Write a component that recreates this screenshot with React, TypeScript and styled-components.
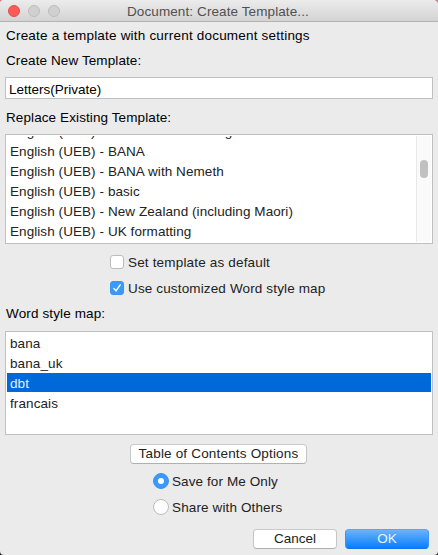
import React from "react";
import styled, { createGlobalStyle } from "styled-components";

const Global = createGlobalStyle`
  html, body, #root { margin: 0; padding: 0; height: 100%; overflow: hidden; background: #ebebeb; }
  * { box-sizing: border-box; }
`;

const Dialog = styled.div`
  display: flex;
  flex-direction: column;
  width: 438px;
  height: 555px;
  overflow: hidden;
  background: #ebebeb;
  border-radius: 4px 5px 4px 4px;
  font: 13.5px/20px "Liberation Sans", Arial, sans-serif;
  color: #111;
`;

const Backdrop = styled.div`
  width: 438px;
  height: 555px;
  background: linear-gradient(to bottom, #c98288 50%, #222 50%);
`;

const TitleBar = styled.header`
  display: flex;
  align-items: center;
  height: 22px;
  padding: 0 0 0 8px;
  background: linear-gradient(#ececec, #d3d3d3);
  border-bottom: 1px solid #b3b3b3;
`;

const Light = styled.span<{ $close?: boolean }>`
  width: 12px;
  height: 12px;
  margin: 1px 8px 0 0;
  border-radius: 50%;
  background: ${(p) => (p.$close ? "#fc5b57" : "#d0d0d0")};
  border: 1px solid ${(p) => (p.$close ? "#e2504c" : "#bdbdbd")};
`;

const Text = styled.span<{ $track?: number }>`
  white-space: pre;
  letter-spacing: ${(p) => p.$track ?? 0.1}px;
`;

const Title = styled(Text)`
  margin: 2px 0 0 59px;
  color: #505050;
`;

const Content = styled.main`
  display: flex;
  flex-direction: column;
  padding: 4px 5px 0;
`;

const Label = styled.div<{ $top: number }>`
  height: 20px;
  margin-top: ${(p) => p.$top}px;
  padding-left: 1px;
  color: #000;
`;

const Field = styled.div`
  height: 22px;
  margin-top: 6px;
  padding: 2px 3px;
  background: #fff;
  border: 1px solid #c0c0c0;
  color: #000;
`;

const ListBox = styled.div<{ $height: number; $top: number }>`
  display: flex;
  height: ${(p) => p.$height}px;
  margin-top: ${(p) => p.$top}px;
  padding: 1px;
  background: #fff;
  border: 1px solid #c0c0c0;
`;

const Rows = styled.div<{ $shift?: number }>`
  flex: 1;
  overflow: hidden;
  & > :first-child { margin-top: ${(p) => p.$shift ?? 0}px; }
`;

const Row = styled.div<{ $selected?: boolean }>`
  height: ${(p) => (p.$selected ? 19 : 20)}px;
  margin-bottom: ${(p) => (p.$selected ? 1 : 0)}px;
  padding: 1px 3px 0;
  color: ${(p) => (p.$selected ? "#e4effc" : "#222")};
  background: ${(p) => (p.$selected ? "#0069d9" : "transparent")};
`;

const Track = styled.div`
  width: 15px;
  padding: 24px 0 0 3px;
  background: #fafafa;
  border-left: 1px solid #e8e8e8;
`;

const Thumb = styled.div`
  width: 8px;
  height: 18px;
  border-radius: 4px;
  background: #c1c1c1;
`;

const Option = styled.div<{ $left: number; $top: number }>`
  display: flex;
  align-items: center;
  height: 20px;
  margin: ${(p) => p.$top}px 0 0 ${(p) => p.$left}px;
  color: #222;
`;

const CheckBox = styled.span<{ $on?: boolean }>`
  display: flex;
  align-items: center;
  justify-content: center;
  width: 14px;
  height: 14px;
  margin-right: 4px;
  border-radius: 3px;
  background: ${(p) => (p.$on ? "#3b99fc" : "#fff")};
  border: 1px solid ${(p) => (p.$on ? "#3b94f3" : "#bcbcbc")};
`;

const OptionText = styled(Text)`
  padding-top: 1px;
`;

const Radio = styled(CheckBox)`
  width: 16px;
  height: 16px;
  margin-right: 3px;
  border-radius: 50%;
`;

const Dot = styled.span`
  width: 6px;
  height: 6px;
  border-radius: 50%;
  background: #fff;
`;

const Button = styled.button<{ $width: number; $primary?: boolean }>`
  display: flex;
  align-items: center;
  justify-content: center;
  width: ${(p) => p.$width}px;
  height: 20px;
  padding: 0;
  font: inherit;
  border-radius: 4px;
  color: ${(p) => (p.$primary ? "#eaf4ff" : "#222")};
  background: ${(p) => (p.$primary ? "linear-gradient(#6bb3fa, #087eff)" : "#fff")};
  border: 1px solid;
  border-color: ${(p) => (p.$primary ? "#58a7f7 #3f93f5 #1473e8" : "#cacaca #c6c6c6 #b0b0b0")};
`;

const Actions = styled.div<{ $top: number; $left: number }>`
  display: flex;
  gap: 8px;
  margin: ${(p) => p.$top}px 0 0 ${(p) => p.$left}px;
`;

const templates = [
  "English (UEB) - Australian formatting",
  "English (UEB) - BANA",
  "English (UEB) - BANA with Nemeth",
  "English (UEB) - basic",
  "English (UEB) - New Zealand (including Maori)",
  "English (UEB) - UK formatting",
];
const styleMaps = ["bana", "bana_uk", "dbt", "francais"];

export default function App() {
  return (
    <Backdrop>
      <Global />
      <Dialog>
        <TitleBar>
          <Light $close />
          <Light />
          <Light />
          <Title>Document: Create Template...</Title>
        </TitleBar>
        <Content>
          <Label $top={0}><Text $track={0.2}>Create a template with current document settings</Text></Label>
          <Label $top={5}><Text>Create New Template:</Text></Label>
          <Field><Text $track={0}>Letters(Private)</Text></Field>
          <Label $top={9}><Text>Replace Existing Template:</Text></Label>
          <ListBox $height={110} $top={6}>
            <Rows $shift={-15}>
              {templates.map((t) => <Row key={t}><Text $track={0.07}>{t}</Text></Row>)}
            </Rows>
            <Track><Thumb /></Track>
          </ListBox>
          <Option $left={105} $top={8}>
            <CheckBox /><OptionText $track={0.17}>Set template as default</OptionText>
          </Option>
          <Option $left={105} $top={6}>
            <CheckBox $on>
              <svg width="10" height="10" viewBox="0 0 10 10" fill="none" stroke="#fff" strokeWidth="1.4" strokeLinecap="round">
                <path d="M1.8 5.4 4 7.8 8.2 1.8" />
              </svg>
            </CheckBox>
            <OptionText $track={0.14}>Use customized Word style map</OptionText>
          </Option>
          <Label $top={6}><Text $track={0.13}>Word style map:</Text></Label>
          <ListBox $height={104} $top={7}>
            <Rows>
              {styleMaps.map((t) => <Row key={t} $selected={t === "dbt"}><Text>{t}</Text></Row>)}
            </Rows>
          </ListBox>
          <Actions $top={9} $left={125}><Button $width={177}><Text $track={0.18}>Table of Contents Options</Text></Button></Actions>
          <Option $left={148} $top={7}>
            <Radio $on><Dot /></Radio><OptionText>Save for Me Only</OptionText>
          </Option>
          <Option $left={148} $top={6}>
            <Radio /><OptionText $track={0.13}>Share with Others</OptionText>
          </Option>
          <Actions $top={12} $left={248}>
            <Button $width={84}><Text $track={0}>Cancel</Text></Button>
            <Button $width={84} $primary><Text $track={0}>OK</Text></Button>
          </Actions>
        </Content>
      </Dialog>
    </Backdrop>
  );
}
